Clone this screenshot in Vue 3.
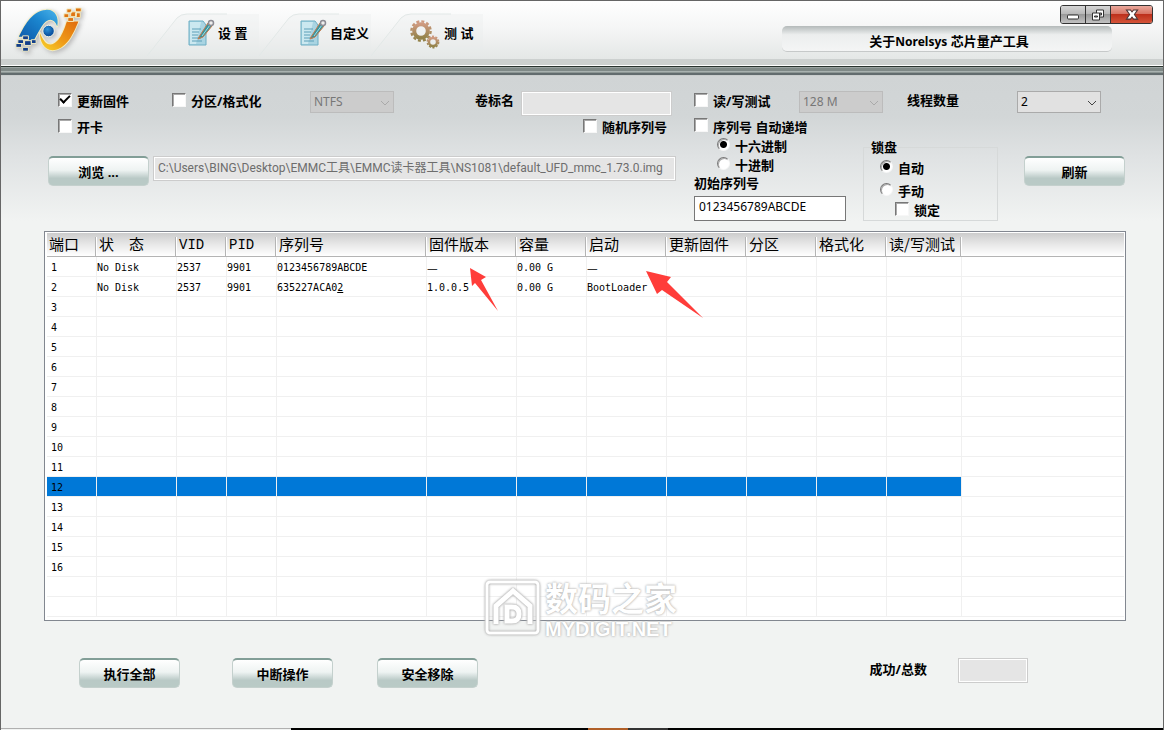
<script setup>
import { ref } from 'vue'

const updateFirmware = ref(true)
const formatDisk = ref(false)
const openCard = ref(false)
const randomSerial = ref(false)
const testDisk = ref(false)
const autoSerial = ref(false)
const lockOn = ref(false)
const radix = ref('hex')
const lockMode = ref('auto')
const volume = ref('')
const startSerial = ref('0123456789ABCDE')
const imagePath = ref('C:\\Users\\BING\\Desktop\\EMMC工具\\EMMC读卡器工具\\NS1081\\default_UFD_mmc_1.73.0.img')
const selected = ref(12)

const columns = ['端口', '状　态', 'VID', 'PID', '序列号', '固件版本', '容量', '启动', '更新固件', '分区', '格式化', '读/写测试', '']
const disks = {
  1: ['No Disk', '2537', '9901', '0123456789ABCDE', '—', '0.00 G', '—'],
  2: ['No Disk', '2537', '9901', '635227ACA02', '1.0.0.5', '0.00 G', 'BootLoader']
}
const rows = Array.from({ length: 18 }, (_, i) => ({
  id: i + 1,
  port: i < 16 ? i + 1 : '',
  cells: Array.from({ length: 12 }, (_, c) => (disks[i + 1] || [])[c] || '')
}))
</script>

<template>
  <div class="window">
    <header class="top">
      <svg class="logo" viewBox="0 0 76 52" aria-label="Norelsys">
        <defs>
          <linearGradient id="blue" x1="0" y1="1" x2="1" y2="0">
            <stop offset="0" stop-color="#0b55a6" /><stop offset=".6" stop-color="#1b86cf" /><stop offset="1" stop-color="#4bb4ea" />
          </linearGradient>
          <linearGradient id="orange" x1="0" y1="1" x2="1" y2="0">
            <stop offset="0" stop-color="#f8d52a" /><stop offset=".45" stop-color="#ef9a18" /><stop offset="1" stop-color="#e06c0c" />
          </linearGradient>
          <radialGradient id="ball" cx=".4" cy=".35">
            <stop offset="0" stop-color="#2d93d8" /><stop offset="1" stop-color="#0d55a3" />
          </radialGradient>
        </defs>
        <g stroke="#f3edc4" stroke-width="2" stroke-linejoin="round" paint-order="stroke">
          <path d="M5 31C10 21 18 4 33 3C43 2 47 11 45 20C41 10 34 12 29 20C24 28 22 33 19 37L15 36V33H10V31Z" fill="url(#blue)" />
          <path d="M67 15H55C53 21 48 38 38 39C33 39 30 34 27 27C27 36 31 44 40 45C54 44 61 30 67 15Z" fill="url(#orange)" />
        </g>
        <circle cx="36" cy="25" r="6" fill="url(#ball)" stroke="#f8f8e8" stroke-width="1" />
        <g fill="#123f8b" stroke="#f3edc4" stroke-width="1">
          <path d="M9 30h6v4h-6zM4 34h6v4h-6zM11 35h7v5h-7zM2 38h6v4h-6zM18 34h5v4h-5zM9 42h6v4h-6z" />
        </g>
        <g fill="#df7411" stroke="#f3edc4" stroke-width="1">
          <path d="M55 2h5v4h-5zM64 1h6v4h-6zM59 5h6v5h-6zM52 7h5v4h-5zM64 6h5v5h-5zM56 11h6v4h-6z" />
        </g>
      </svg>

      <nav class="tabs">
        <button class="tab" type="button">
          <svg class="edge" viewBox="0 0 112 44"><path class="fill" d="M0 43L30 5Q34 1 40 1H112V43Z" /><path class="rim" d="M0 43L30 5Q34 1 40 1H80" /></svg>
          <svg class="glyph" viewBox="0 0 28 28">
            <path d="M2 2H16L19 6V26H2Z" fill="#a9d4e2" stroke="#6daec4" />
            <path d="M3 3H14L9 25H3Z" fill="#cbe8f0" />
            <path d="M5 10H14M5 13H12M5 16H11M5 19H14M5 22H15" stroke="#5d9fb8" />
            <path d="M12 18L21 4L25 7L16 18L11 20Z" fill="#35949f" stroke="#c97b4c" />
            <path d="M15 17L23 6" stroke="#a9dde0" />
            <circle cx="24" cy="4" r="2.5" fill="#eee" stroke="#8c8c94" stroke-width="1.5" />
          </svg>
          <span>设 置</span>
        </button>
        <button class="tab" type="button">
          <svg class="edge" viewBox="0 0 112 44"><path class="fill" d="M0 43L30 5Q34 1 40 1H112V43Z" /><path class="rim" d="M0 43L30 5Q34 1 40 1H80" /></svg>
          <svg class="glyph" viewBox="0 0 28 28">
            <path d="M2 2H16L19 6V26H2Z" fill="#a9d4e2" stroke="#6daec4" />
            <path d="M3 3H14L9 25H3Z" fill="#cbe8f0" />
            <path d="M5 10H14M5 13H12M5 16H11M5 19H14M5 22H15" stroke="#5d9fb8" />
            <path d="M12 18L21 4L25 7L16 18L11 20Z" fill="#35949f" stroke="#c97b4c" />
            <path d="M15 17L23 6" stroke="#a9dde0" />
            <circle cx="24" cy="4" r="2.5" fill="#eee" stroke="#8c8c94" stroke-width="1.5" />
          </svg>
          <span>自定义</span>
        </button>
        <button class="tab" type="button">
          <svg class="edge" viewBox="0 0 112 44"><path class="fill" d="M0 43L30 5Q34 1 40 1H112V43Z" /><path class="rim" d="M0 43L30 5Q34 1 40 1H80" /></svg>
          <svg class="glyph gears" viewBox="0 0 32 30">
            <defs>
              <linearGradient id="gear" x1="0" y1="0" x2="0" y2="1">
                <stop offset="0" stop-color="#cf9a80" /><stop offset="1" stop-color="#93834a" />
              </linearGradient>
            </defs>
            <g fill="none" stroke="url(#gear)">
              <circle cx="12" cy="12" r="6.800" stroke-width="4" />
              <circle cx="12" cy="12" r="9.600" stroke-width="2.400" stroke-dasharray="3 2.030" />
              <circle cx="24" cy="23" r="4" stroke-width="2.400" />
              <circle cx="24" cy="23" r="5.600" stroke-width="1.600" stroke-dasharray="2.200 1.320" />
            </g>
          </svg>
          <span>测 试</span>
        </button>
      </nav>

      <div class="title-side">
        <div class="window-buttons">
          <button type="button" aria-label="最小化">
            <svg viewBox="0 0 24 16"><rect x="6.500" y="8.500" width="11" height="4" rx="1" fill="#fff" stroke="#333" /></svg>
          </button>
          <button type="button" aria-label="还原">
            <svg viewBox="0 0 24 16">
              <path d="M10.500 3.500h7v7h-7z" fill="#fff" stroke="#333" /><path d="M13.500 6.500h2v2h-2z" fill="#999" stroke="#333" />
              <path d="M6.500 6.500h7v7h-7z" fill="#fff" stroke="#333" /><path d="M8.500 9.500h3v1h-3z" fill="#999" stroke="#333" />
            </svg>
          </button>
          <button class="close" type="button" aria-label="关闭">
            <svg viewBox="0 0 40 16"><path d="M15 3.500H19L20.500 5.500L22 3.500H26L22.800 8L26 12.500H22L20.500 10.500L19 12.500H15L18.200 8Z" fill="#fff" stroke="#4a3434" /></svg>
          </button>
        </div>
        <h1 class="title">关于<span>Norelsys</span> 芯片量产工具</h1>
      </div>
    </header>
    <div class="bands"></div>

    <main class="body">
      <form class="controls" @submit.prevent>
        <section class="left">
          <div class="line">
            <label class="opt c1"><input v-model="updateFirmware" type="checkbox" />更新固件</label>
            <label class="opt c2"><input v-model="formatDisk" type="checkbox" />分区/格式化</label>
            <span class="drop off">
              <select aria-label="文件系统" disabled><option>NTFS</option></select>
              <svg viewBox="0 0 10 6"><path d="M1 1L5 5L9 1" /></svg>
            </span>
            <label class="caption push" for="volume">卷标名</label>
            <input id="volume" v-model="volume" class="field grey volume" type="text" disabled />
          </div>
          <div class="line second">
            <label class="opt"><input v-model="openCard" type="checkbox" />开卡</label>
            <label class="opt"><input v-model="randomSerial" type="checkbox" />随机序列号</label>
          </div>
          <div class="path-line">
            <button class="btn" type="button">浏览 ...</button>
            <input v-model="imagePath" class="field grey path" type="text" aria-label="固件路径" disabled />
          </div>
        </section>

        <section class="right">
          <div class="line flush">
            <label class="opt c3"><input v-model="testDisk" type="checkbox" />读/写测试</label>
            <span class="drop off">
              <select aria-label="测试容量" disabled><option>128 M</option></select>
              <svg viewBox="0 0 10 6"><path d="M1 1L5 5L9 1" /></svg>
            </span>
            <label class="caption threads" for="threads">线程数量</label>
            <span class="drop">
              <select id="threads"><option>2</option></select>
              <svg viewBox="0 0 10 6"><path d="M1 1L5 5L9 1" /></svg>
            </span>
          </div>
          <div class="groups">
            <div class="serial">
              <label class="opt"><input v-model="autoSerial" type="checkbox" />序列号 自动递增</label>
              <label class="opt inset"><input v-model="radix" type="radio" name="radix" value="hex" />十六进制</label>
              <label class="opt inset"><input v-model="radix" type="radio" name="radix" value="dec" />十进制</label>
              <label class="start-label" for="start">初始序列号</label>
              <input id="start" v-model="startSerial" class="field start" type="text" />
            </div>
            <fieldset class="lock">
              <legend>锁盘</legend>
              <label class="opt"><input v-model="lockMode" type="radio" name="lock" value="auto" />自动</label>
              <label class="opt"><input v-model="lockMode" type="radio" name="lock" value="manual" />手动</label>
              <label class="opt nested"><input v-model="lockOn" type="checkbox" />锁定</label>
            </fieldset>
            <button class="btn refresh" type="button">刷新</button>
          </div>
        </section>
      </form>

      <div class="list">
        <table>
          <colgroup><col v-for="(c, i) in columns" :key="i" :class="'w' + i" /></colgroup>
          <thead>
            <tr><th v-for="(c, i) in columns" :key="i" :class="{ latin: i === 2 || i === 3 }"><span>{{ c }}</span></th></tr>
          </thead>
          <tbody>
            <tr v-for="row in rows" :key="row.id" :class="{ active: row.id === selected }" @click="selected = row.id">
              <td class="port">{{ row.port }}</td>
              <td v-for="(cell, i) in row.cells" :key="i" :class="{ dash: cell === '—' }">
                <template v-if="row.id === 2 && i === 3">635227ACA0<u>2</u></template>
                <template v-else>{{ cell }}</template>
              </td>
            </tr>
          </tbody>
        </table>
        <svg class="arrow arrow-version" viewBox="0 0 28 43"><path d="M0 0L16 9L11 12L28 43L5 15L2 18Z" /></svg>
        <svg class="arrow arrow-boot" viewBox="0 0 57 47"><path d="M0 0L25 6L21 11L57 47L16 19L11 23Z" /></svg>
        <div class="watermark">
          <svg viewBox="0 0 56 56">
            <rect x="2" y="2" width="51" height="51" rx="3" />
            <path class="roof" d="M11 44V26L28 11L45 26V44" />
            <path class="roof" d="M22 27H27Q34 27 34 34T27 41H22Z" />
          </svg>
          <div><b>数码之家</b><i>MYDIGIT.NET</i></div>
        </div>
      </div>

      <footer class="actions">
        <div class="action-buttons">
          <button class="btn" type="button">执行全部</button>
          <button class="btn" type="button">中断操作</button>
          <button class="btn" type="button">安全移除</button>
        </div>
        <label class="result" for="result">成功/总数</label>
        <input id="result" class="field grey count" type="text" disabled />
      </footer>
    </main>
    <div class="strip"><span class="pale"></span><span class="dark"></span><span class="amber"></span><span class="ash"></span><span class="dark rest"></span></div>
  </div>
</template>

<style>
body { margin: 0; }
</style>

<style scoped>
* { box-sizing: border-box; }
.window {
  min-height: 100vh;
  display: flex;
  flex-direction: column;
  border: solid #666;
  border-width: 1px 1px 0;
  background: #f1f3f2;
  color: #000;
  font: bold 13px/20px "Noto Sans", "Noto Sans CJK SC", sans-serif;
}
button, input, select { font: inherit; color: inherit; margin: 0; }
.top {
  display: flex;
  height: 58px;
  background: linear-gradient(#fff, #f4f5f5 50%, #e4e7e6);
}
.logo { width: 73px; height: 50px; margin: 6px 0 0 13px; filter: drop-shadow(2px 2px 2px #bbb); }
.tabs { display: flex; margin-left: 60px; }
.tab {
  position: relative;
  width: 112px;
  padding: 5px 0 0 40px;
  display: flex;
  align-items: center;
  gap: 3px;
  border: 0;
  background: none;
  white-space: nowrap;
  text-align: left;
}
.tab > span { position: relative; }
.edge { position: absolute; left: 0; top: 12px; width: 112px; height: 44px; fill: none; }
.edge .fill { fill: #e9eceb; fill-opacity: .3; }
.edge .rim { stroke: #e2e8e7; }
.glyph { position: relative; flex: none; width: 28px; height: 28px; fill: none; }
.gears { width: 32px; height: 30px; margin: 2px 0 0 -2px; }
.title-side { margin-left: auto; margin-right: 10px; display: flex; flex-direction: column; align-items: flex-end; }
.window-buttons { display: flex; margin-top: 4px; height: 19px; border: 1px solid #333; border-radius: 3px; overflow: hidden; }
.window-buttons button { width: 25px; padding: 0; border: 0; border-right: 1px solid #333; background: linear-gradient(#d6d6d6, #b9b9b9 45%, #999 50%, #c2c2c2); }
.window-buttons .close { width: 41px; border: 0; background: linear-gradient(#e9a89c, #d87565 45%, #bd301c 50%, #d55439); }
.window-buttons svg { display: block; width: 100%; height: 17px; }
.title {
  width: 330px;
  height: 26px;
  margin: 2px 41px 0 0;
  padding-left: 4px;
  border-bottom: 1px solid #c6c9c9;
  border-radius: 5px;
  background: linear-gradient(#b4baba, #eceeee 35%, #f4f5f5);
  font-size: 13px;
  line-height: 30px;
  text-align: center;
}
.title span { font-size: 12px; }
.bands {
  height: 17px;
  background: linear-gradient(#ccd0cf 0 6px, #fff 6px 7px, #29332f 7px 8px, #9aa3a1 8px 9px, #7f8987 9px 12px, #a9b2b0 12px 13px, #8c9694 13px 14px, #626c6e 14px 16px, #c9cdcd 16px);
}
.body { flex: 1; background: linear-gradient(#d0d4d5, #d2d6d7 40px, #dfe2e3 80px, #f1f3f2 145px); }
.controls { display: flex; gap: 18px; padding: 15px 38px 0 47px; }
.left { flex: 1; }
.right { width: 431px; }
.line { display: flex; align-items: flex-start; height: 26px; padding: 0 4px 0 10px; }
.flush { padding: 0; }
.second { justify-content: space-between; height: 39px; padding-right: 9px; }
.opt { display: flex; align-items: center; gap: 5px; height: 20px; white-space: nowrap; }
.opt input {
  appearance: none;
  flex: none;
  width: 14px;
  height: 14px;
  margin-bottom: 3px;
  background: #fff;
  border: 1px solid;
  border-color: #777 #f7f7f7 #f7f7f7 #777;
  box-shadow: inset 1px 1px #aaa;
}
.opt input[type=checkbox]:checked { display: grid; place-items: center; }
.opt input[type=checkbox]:checked::before { content: ""; width: 8px; height: 4px; margin-bottom: 3px; border: solid #000; border-width: 0 0 2px 2px; transform: rotate(-45deg); }
.opt input[type=radio] { width: 13px; height: 13px; border-radius: 50%; }
.opt input[type=radio]:checked { background: radial-gradient(circle, #000 3px, #fff 4px); }
.c1 { width: 114px; }
.c2 { width: 138px; }
.c3 { width: 105px; }
.drop { position: relative; width: 84px; height: 22px; }
.drop select { appearance: none; width: 100%; height: 100%; padding: 0 3px; border: 1px solid #aaa; border-radius: 0; background: #e1e1e1; font-size: 12px; font-weight: normal; line-height: 20px; opacity: 1; }
.drop svg { position: absolute; right: 4px; top: 9px; width: 10px; height: 6px; fill: none; stroke: #444; pointer-events: none; }
.drop.off select { border-color: #bcbcbc; background: #ccc; color: #777; }
.drop.off svg { stroke: #aaa; }
.push { margin-left: auto; margin-right: 7px; }
.caption { line-height: 18px; }
.threads { margin-left: 24px; width: 110px; }
.field { height: 25px; padding: 0 4px 4px; border: 1px solid #777; border-radius: 0; background: #fff; font-size: 12px; font-weight: normal; outline: 0; }
.grey { border-color: #ccc; background: #e5e5e5; box-shadow: inset 0 0 0 1px #fff; color: #6d6d6d; }
.volume { width: 151px; }
.path-line { display: flex; gap: 4px; }
.path { flex: 1; min-width: 0; font-family: Roboto, "Noto Sans CJK SC", sans-serif; }
.btn {
  width: 101px;
  height: 30px;
  flex: none;
  padding: 0;
  border: 1px solid #c4d0cd;
  border-top: 2px solid #829e97;
  border-radius: 5px;
  background: linear-gradient(#fff, #eef3f2 45%, #b9c9c6 75%, #b9cac6);
}
.groups { display: flex; align-items: flex-start; }
.serial { width: 152px; display: flex; flex-direction: column; }
.serial .opt { height: 19px; }
.inset { padding-left: 23px; }
.start-label { line-height: 16px; margin: 1px 0 5px; }
.start { width: 152px; }
.lock { width: 135px; height: 82px; margin: 22px 26px 0 17px; padding: 3px 0 0 16px; border: 1px solid #d6d9d9; }
.lock legend { margin-left: -9px; padding: 0; line-height: 16px; }
.lock .opt + .opt { margin-top: 3px; }
.lock .opt + .nested { margin: -1px 0 0 15px; }
.refresh { margin-top: 39px; }
.list { position: relative; margin: 10px 37px 0 43px; height: 390px; padding: 1px 1px 0 2px; border: 1px solid #828790; background: #fff; }
table { width: 100%; table-layout: fixed; border-collapse: separate; border-spacing: 0; font: 10px/17px "DejaVu Sans Mono", "Noto Sans CJK SC", monospace; }
.w0, .w2, .w3 { width: 50px; }
.w1, .w7, .w8 { width: 80px; }
.w4 { width: 150px; }
.w5 { width: 90px; }
.w6, .w9, .w10 { width: 70px; }
.w11 { width: 75px; }
th { height: 24px; padding: 4px 0 0; border-bottom: 1px solid #b4b4b4; background: linear-gradient(#ccc, #e8e8e8 50%, #fff); font: 15px/19px "Noto Sans CJK SC", sans-serif; text-align: left; white-space: nowrap; }
th span { display: block; height: 19px; padding-left: 2px; border-right: 1px solid #fff; box-shadow: inset -1px 0 #b4b4b4; line-height: 13px; }
th:last-child span { border: 0; box-shadow: none; }
th.latin { font-family: "Liberation Mono", monospace; font-size: 14px; }
th.latin span { line-height: 16px; }
td { height: 20px; padding: 2px 0 0; border: solid #f0f0f0; border-width: 0 1px 1px 0; white-space: nowrap; overflow: hidden; }
td:last-child { border-right: 0; }
td.port { padding-left: 4px; }
td.dash { font-family: "Noto Sans CJK SC", sans-serif; font-size: 12px; line-height: 16px; }
.active td:not(:last-child) { background: #0078d7; }
.arrow { position: absolute; fill: #ff3d3a; }
.arrow-version { left: 425px; top: 36px; width: 28px; height: 43px; }
.arrow-boot { left: 601px; top: 39px; width: 57px; height: 47px; }
.watermark { position: absolute; left: 440px; top: 348px; display: flex; gap: 4px; color: #fff; pointer-events: none; text-shadow: 0 0 2px #aaa, 0 0 3px #ccc; }
.watermark svg { width: 56px; height: 56px; fill: none; stroke: #fff; stroke-width: 3; filter: drop-shadow(0 0 1px #aaa) drop-shadow(0 0 1px #ccc); }
.watermark .roof { stroke-width: 5; }
.watermark b { display: block; font: bold 33px/34px "Noto Sans CJK SC", sans-serif; }
.watermark i { display: block; margin-top: 5px; font: normal bold 20px/20px "Liberation Sans", sans-serif; }
.actions { display: flex; align-items: flex-start; padding: 37px 135px 0 78px; }
.action-buttons { display: grid; grid-template-columns: 153px 145px auto; margin-right: auto; }
.result { margin-right: 31px; line-height: 22px; }
.count { width: 70px; }
.strip { display: flex; height: 2px; }
.strip span { height: 2px; }
.pale { flex: 290; border-top: 1px solid #b0b0b0; }
.dark { flex: 297; background: #000; }
.amber { flex: 40; background: #b05f28; }
.ash { flex: 40; background: #333; }
.rest { flex: 495; }
</style>
